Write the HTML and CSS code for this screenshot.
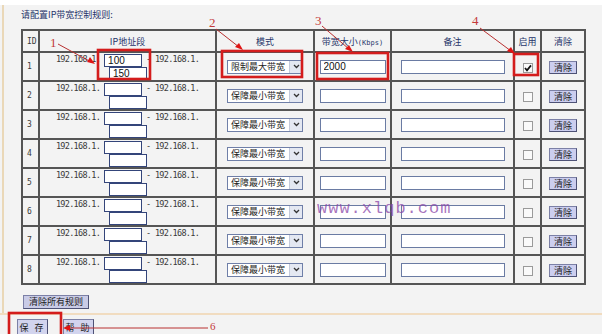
FILE: index.html
```html
<!DOCTYPE html>
<html lang="zh-CN">
<head>
    <meta charset="UTF-8">
    <title>IP带宽控制规则</title>
    <link rel="stylesheet" href="styles.css">
</head>
<body>
    <div class="top-strip"></div>
    <div class="panel">
        <div class="title">请配置IP带宽控制规则:</div>
        <table class="rules">
            <colgroup>
                <col style="width:17px">
                <col style="width:177px">
                <col style="width:98px">
                <col style="width:77px">
                <col style="width:123px">
                <col style="width:27px">
                <col style="width:44px">
            </colgroup>
            <tr class="head">
                <th class="id">ID</th>
                <th>IP地址段</th>
                <th>模式</th>
                <th>带宽大小<span class="kbps">(Kbps)</span></th>
                <th>备注</th>
                <th>启用</th>
                <th>清除</th>
            </tr>
            <tr>
                <td class="id">1</td>
                <td class="ip">
                    <div class="ip-line"><span>192.168.1.</span><input class="ip-in" value="100"><span>- 192.168.1.</span></div>
                    <div class="ip-line2"><input class="ip-in" value="150"></div>
                </td>
                <td><div class="sel"><span class="sel-text">限制最大带宽</span><span class="sel-btn"><svg width="7" height="5" viewBox="0 0 7 5"><path d="M1 1 L3.5 3.5 L6 1" fill="none" stroke="#333" stroke-width="1.3"/></svg></span></div></td>
                <td><input class="bw-in" value="2000"></td>
                <td><input class="note-in" value=""></td>
                <td><span class="chk"><svg width="10" height="10" viewBox="0 0 10 10"><path d="M2 5 L4 7.4 L8 2.4" fill="none" stroke="#111" stroke-width="1.7"/></svg></span></td>
                <td><button class="btn">清除</button></td>
            </tr>
            <tr>
                <td class="id">2</td>
                <td class="ip">
                    <div class="ip-line"><span>192.168.1.</span><input class="ip-in"><span>- 192.168.1.</span></div>
                    <div class="ip-line2"><input class="ip-in"></div>
                </td>
                <td><div class="sel"><span class="sel-text">保障最小带宽</span><span class="sel-btn"><svg width="7" height="5" viewBox="0 0 7 5"><path d="M1 1 L3.5 3.5 L6 1" fill="none" stroke="#333" stroke-width="1.3"/></svg></span></div></td>
                <td><input class="bw-in"></td>
                <td><input class="note-in"></td>
                <td><span class="chk"></span></td>
                <td><button class="btn">清除</button></td>
            </tr>
            <tr>
                <td class="id">3</td>
                <td class="ip">
                    <div class="ip-line"><span>192.168.1.</span><input class="ip-in"><span>- 192.168.1.</span></div>
                    <div class="ip-line2"><input class="ip-in"></div>
                </td>
                <td><div class="sel"><span class="sel-text">保障最小带宽</span><span class="sel-btn"><svg width="7" height="5" viewBox="0 0 7 5"><path d="M1 1 L3.5 3.5 L6 1" fill="none" stroke="#333" stroke-width="1.3"/></svg></span></div></td>
                <td><input class="bw-in"></td>
                <td><input class="note-in"></td>
                <td><span class="chk"></span></td>
                <td><button class="btn">清除</button></td>
            </tr>
            <tr>
                <td class="id">4</td>
                <td class="ip">
                    <div class="ip-line"><span>192.168.1.</span><input class="ip-in"><span>- 192.168.1.</span></div>
                    <div class="ip-line2"><input class="ip-in"></div>
                </td>
                <td><div class="sel"><span class="sel-text">保障最小带宽</span><span class="sel-btn"><svg width="7" height="5" viewBox="0 0 7 5"><path d="M1 1 L3.5 3.5 L6 1" fill="none" stroke="#333" stroke-width="1.3"/></svg></span></div></td>
                <td><input class="bw-in"></td>
                <td><input class="note-in"></td>
                <td><span class="chk"></span></td>
                <td><button class="btn">清除</button></td>
            </tr>
            <tr>
                <td class="id">5</td>
                <td class="ip">
                    <div class="ip-line"><span>192.168.1.</span><input class="ip-in"><span>- 192.168.1.</span></div>
                    <div class="ip-line2"><input class="ip-in"></div>
                </td>
                <td><div class="sel"><span class="sel-text">保障最小带宽</span><span class="sel-btn"><svg width="7" height="5" viewBox="0 0 7 5"><path d="M1 1 L3.5 3.5 L6 1" fill="none" stroke="#333" stroke-width="1.3"/></svg></span></div></td>
                <td><input class="bw-in"></td>
                <td><input class="note-in"></td>
                <td><span class="chk"></span></td>
                <td><button class="btn">清除</button></td>
            </tr>
            <tr>
                <td class="id">6</td>
                <td class="ip">
                    <div class="ip-line"><span>192.168.1.</span><input class="ip-in"><span>- 192.168.1.</span></div>
                    <div class="ip-line2"><input class="ip-in"></div>
                </td>
                <td><div class="sel"><span class="sel-text">保障最小带宽</span><span class="sel-btn"><svg width="7" height="5" viewBox="0 0 7 5"><path d="M1 1 L3.5 3.5 L6 1" fill="none" stroke="#333" stroke-width="1.3"/></svg></span></div></td>
                <td><input class="bw-in"></td>
                <td><input class="note-in"></td>
                <td><span class="chk"></span></td>
                <td><button class="btn">清除</button></td>
            </tr>
            <tr>
                <td class="id">7</td>
                <td class="ip">
                    <div class="ip-line"><span>192.168.1.</span><input class="ip-in"><span>- 192.168.1.</span></div>
                    <div class="ip-line2"><input class="ip-in"></div>
                </td>
                <td><div class="sel"><span class="sel-text">保障最小带宽</span><span class="sel-btn"><svg width="7" height="5" viewBox="0 0 7 5"><path d="M1 1 L3.5 3.5 L6 1" fill="none" stroke="#333" stroke-width="1.3"/></svg></span></div></td>
                <td><input class="bw-in"></td>
                <td><input class="note-in"></td>
                <td><span class="chk"></span></td>
                <td><button class="btn">清除</button></td>
            </tr>
            <tr>
                <td class="id">8</td>
                <td class="ip">
                    <div class="ip-line"><span>192.168.1.</span><input class="ip-in"><span>- 192.168.1.</span></div>
                    <div class="ip-line2"><input class="ip-in"></div>
                </td>
                <td><div class="sel"><span class="sel-text">保障最小带宽</span><span class="sel-btn"><svg width="7" height="5" viewBox="0 0 7 5"><path d="M1 1 L3.5 3.5 L6 1" fill="none" stroke="#333" stroke-width="1.3"/></svg></span></div></td>
                <td><input class="bw-in"></td>
                <td><input class="note-in"></td>
                <td><span class="chk"></span></td>
                <td><button class="btn">清除</button></td>
            </tr>
        </table>
        <div class="clear-all"><button class="btn btn-wide">清除所有规则</button></div>
    </div>
    <div class="footer">
        <button class="btn btn-foot">保 存</button>
        <button class="btn btn-foot">帮 助</button>
    </div>

    <!-- 标注 -->
    <div class="watermark">www.xlqb.com</div>
    <svg class="marks" width="602" height="334" viewBox="0 0 602 334">
        <g fill="none" stroke="#d41c1c" stroke-width="2.6">
            <rect x="98" y="50" width="52" height="29"/>
            <rect x="222" y="51" width="80" height="26"/>
            <rect x="317" y="53" width="71" height="26"/>
            <rect x="514" y="54" width="24" height="21"/>
            <rect x="9" y="313" width="52" height="30"/>
        </g>
        <g stroke="#b83030" stroke-width="1">
            <line x1="58" y1="44" x2="91" y2="62"/>
            <line x1="216" y1="29" x2="239" y2="47"/>
            <line x1="322" y1="26" x2="349" y2="49"/>
            <line x1="480" y1="28" x2="511" y2="51"/>
            <line x1="208" y1="328" x2="68" y2="328"/>
        </g>
        <g fill="#e01414">
            <path d="M95 64 L87 62 L90 57 Z"/>
            <path d="M243 50 L235 47 L239 43 Z"/>
            <path d="M353 52 L345 49 L349 45 Z"/>
            <path d="M515 54 L507 51 L511 47 Z"/>
            <path d="M63 328 L70 325 L70 331 Z"/>
        </g>
        <g fill="#c43a3a" font-family="Liberation Serif, serif" font-size="13">
            <text x="50" y="47">1</text>
            <text x="209" y="27">2</text>
            <text x="315" y="25">3</text>
            <text x="472" y="25">4</text>
            <text x="210" y="330" font-size="11">6</text>
        </g>
    </svg>
</body>
</html>
```

FILE: styles.css
```css
body {
    margin: 0;
    width: 602px;
    height: 334px;
    overflow: hidden;
    position: relative;
    background-color: #f3f3f3;
    font-family: "Noto Sans CJK SC", "Liberation Sans", sans-serif;
    font-size: 9px;
    color: #2b2b2b;
}
.top-strip {
    height: 5px;
    background-color: #ffffff;
}
.panel {
    margin-left: 2px;
    border-left: 2px solid #ead8b8;
    padding: 0 0 5px 17px;
}
.title {
    padding-top: 3px;
    height: 14px;
    line-height: 14px;
    color: #26346a;
    margin-bottom: 7px;
}
.rules {
    table-layout: fixed;
    width: 563px;
    border-collapse: collapse;
}
.rules th, .rules td {
    border: 2px solid #555555;
    padding: 0;
    text-align: center;
    vertical-align: middle;
}
.rules th {
    height: 20px;
    font-weight: normal;
    color: #26346a;
}
.rules td {
    height: 27px;
}
.rules .id {
    text-align: left;
    padding-left: 4px;
    font-family: "DejaVu Sans Mono", monospace;
    font-size: 8px;
    color: #3a3a3a;
}
.kbps {
    font-family: "DejaVu Sans Mono", monospace;
    font-size: 7px;
}
.ip {
    font-family: "DejaVu Sans Mono", monospace;
    font-size: 8.5px;
    letter-spacing: -0.7px;
    color: #3a3a3a;
}
.ip-line {
    display: flex;
    justify-content: center;
    align-items: flex-start;
    gap: 4px;
    height: 13px;
    line-height: 11px;
}
.ip-line2 {
    display: flex;
    justify-content: center;
    padding-left: 1px;
}
input {
    box-sizing: border-box;
    margin: 0;
    background-color: #ffffff;
    font-family: "Liberation Sans", sans-serif;
    font-size: 10px;
    color: #111111;
    outline: none;
}
.ip-in {
    width: 38px;
    height: 13px;
    border: 1px solid #34457a;
    padding: 0 3px;
    letter-spacing: 0;
}
.bw-in {
    width: 66px;
    height: 14px;
    border: 1px solid #6a7ba3;
    padding: 0 3px;
}
.note-in {
    width: 104px;
    height: 14px;
    border: 1px solid #6a7ba3;
}
.sel {
    display: inline-flex;
    align-items: center;
    width: 76px;
    height: 14px;
    box-sizing: border-box;
    border: 1px solid #6f7fa8;
    background-color: #ffffff;
    vertical-align: middle;
}
.sel-text {
    flex: 1;
    text-align: left;
    padding-left: 3px;
    line-height: 12px;
    color: #222222;
}
.sel-btn {
    display: flex;
    align-items: center;
    justify-content: center;
    width: 12px;
    height: 12px;
    background-color: #e4e8f2;
    border-left: 1px solid #c3cadb;
}
.chk {
    display: inline-block;
    width: 10px;
    height: 10px;
    box-sizing: border-box;
    border: 1px solid #9a9a9a;
    background-color: #fafafa;
    vertical-align: middle;
    line-height: 0;
}
.chk svg {
    margin: -1px 0 0 -1px;
}
.btn {
    margin: 0;
    padding: 0 4px;
    height: 13px;
    font-family: "Noto Sans CJK SC", sans-serif;
    font-size: 9px;
    line-height: 11px;
    color: #1a1a1a;
    background-color: #ccceef;
    border: 1px solid #7c80a6;
    border-right-color: #4e5276;
    border-bottom-color: #4e5276;
    border-radius: 0;
    vertical-align: middle;
}
.clear-all {
    margin-top: 9px;
    padding-left: 2px;
    height: 14px;
}
.btn-wide {
    height: 14px;
    padding: 0 5px;
    background-color: #c9cbe6;
}
.footer {
    border-top: 2px solid #f1dcc0;
    padding: 4px 0 0 17px;
    display: flex;
    gap: 15px;
}
.btn-foot {
    height: 16px;
    width: 31px;
    padding: 0;
    letter-spacing: 2px;
    background-color: #d2d4ee;
}
.watermark {
    position: absolute;
    left: 317px;
    top: 199px;
    font-family: "Liberation Mono", monospace;
    font-size: 17px;
    letter-spacing: 1px;
    color: rgba(138, 70, 168, 0.75);
}
.marks {
    position: absolute;
    left: 0;
    top: 0;
    pointer-events: none;
}
```
